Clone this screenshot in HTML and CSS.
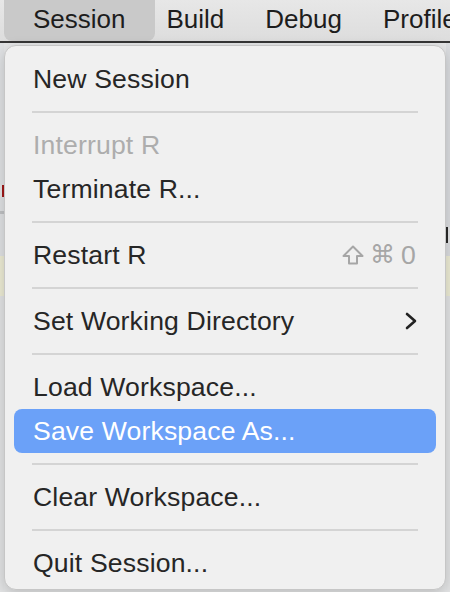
FILE: index.html
```html
<!DOCTYPE html>
<html>
<head>
<meta charset="utf-8">
<link rel="stylesheet" href="styles.css">
</head>
<body>
<div class="app">
  <div class="menubar">
    <span class="mb-item active">Session</span>
    <span class="mb-item">Build</span>
    <span class="mb-item">Debug</span>
    <span class="mb-item">Profile</span>
  </div>
  <div class="workspace">
    <div class="strip left">
      <div class="blk g1"></div>
      <div class="blk red"></div>
      <div class="blk g2"></div>
      <div class="blk line"></div>
      <div class="blk g3"></div>
      <div class="blk yellow"></div>
      <div class="blk g4"></div>
    </div>
    <div class="center"></div>
    <div class="strip right">
      <div class="blk g1"></div>
      <div class="blk dark"></div>
      <div class="blk g5"></div>
      <div class="blk yellow"></div>
      <div class="blk g4"></div>
    </div>
  </div>

  <div class="menu">
    <div class="item">New Session</div>
    <div class="sep"></div>
    <div class="item disabled">Interrupt R</div>
    <div class="item">Terminate R...</div>
    <div class="sep"></div>
    <div class="item"><span>Restart R</span><span class="shortcut"><svg class="shift" width="22" height="20" viewBox="0 0 22 20"><path d="M11 1.5 L20.5 11 L15 11 L15 18.5 L7 18.5 L7 11 L1.5 11 Z" fill="none" stroke="#a6a6a6" stroke-width="2" stroke-linejoin="round"/></svg><span class="sym">⌘</span><span>0</span></span></div>
    <div class="sep"></div>
    <div class="item"><span>Set Working Directory</span><svg class="chev" width="12" height="18" viewBox="0 0 12 18"><path d="M2 2 L10 9 L2 16" fill="none" stroke="#222" stroke-width="2.6" stroke-linecap="round" stroke-linejoin="round"/></svg></div>
    <div class="sep"></div>
    <div class="item">Load Workspace...</div>
    <div class="item selected">Save Workspace As...</div>
    <div class="sep"></div>
    <div class="item">Clear Workspace...</div>
    <div class="sep"></div>
    <div class="item">Quit Session...</div>
  </div>
</div>
</body>
</html>
```

FILE: styles.css
```css
html, body {
  margin: 0;
  padding: 0;
}

.app {
  position: relative;
  width: 450px;
  height: 592px;
  overflow: hidden;
  background: #e4e5e6;
  font-family: "Liberation Sans", Arial, sans-serif;
}

.menubar {
  position: relative;
  z-index: 0;
  height: 43px;
  box-sizing: border-box;
  display: flex;
  align-items: flex-start;
  padding-left: 12.5px;
  background: linear-gradient(#e7e7e7, #dddddd);
  border-bottom: 2px solid #363636;
  font-size: 26px;
  color: #1d1d1d;
  white-space: nowrap;
}

.mb-item {
  position: relative;
  padding: 0 20.5px;
  line-height: 38px;
}

.mb-item.active::before {
  content: "";
  position: absolute;
  top: 0;
  bottom: -3px;
  left: -8.5px;
  right: -8.5px;
  background: #c9c9c9;
  border-radius: 0 0 8px 8px;
  z-index: -1;
}

.workspace {
  display: flex;
  height: 547px;
}

.strip {
  width: 4px;
  display: flex;
  flex-direction: column;
}

.center {
  flex: 1;
}

.blk { flex: none; }
.left .g1 { height: 142px; background: #dfe1e3; }
.left .red { height: 12px; background: #a01818; width: 2px; margin-left: 2px; }
.left .g2 { height: 14px; background: #dfe1e3; }
.left .line { height: 3px; background: #bfc1c3; }
.left .g3 { height: 42px; background: #dfe1e3; }
.yellow { height: 40px; background: #ecebd4; }
.g4 { flex: 1; background: #e2e3e4; }
.right .g1 { height: 184px; background: #dadcdf; }
.right .dark { height: 16px; background: #2a2a2a; width: 2px; }
.right .g5 { height: 13px; background: #dadcdf; }

.menu {
  position: absolute;
  left: 4px;
  top: 45px;
  width: 442px;
  height: 545px;
  box-sizing: border-box;
  padding: 11px 9px 4px;
  background: #f0f0f0;
  border: 1px solid #c6c6c6;
  border-radius: 12px;
  box-shadow: 0 4px 14px rgba(0, 0, 0, 0.18);
  font-size: 26.6px;
  letter-spacing: 0.15px;
  color: #262626;
}

.item {
  height: 44px;
  box-sizing: border-box;
  padding: 0 20px 0 19px;
  display: flex;
  align-items: center;
  justify-content: space-between;
  border-radius: 8px;
  line-height: 44px;
  white-space: nowrap;
}

.item.disabled {
  color: #adadad;
}

.item.selected {
  background: #6ba1f8;
  color: #ffffff;
}

.sep {
  height: 22px;
  margin: 0 18px;
  display: flex;
  align-items: center;
}

.sep::before {
  content: "";
  flex: 1;
  height: 2px;
  background: #d4d4d4;
}

.shortcut {
  display: flex;
  align-items: center;
  gap: 6px;
  color: #a6a6a6;
}

.shift {
  display: block;
}

.sym {
  font-family: "DejaVu Sans", sans-serif;
  font-size: 25px;
}

.chev {
  display: block;
  margin-right: -1px;
}
```
